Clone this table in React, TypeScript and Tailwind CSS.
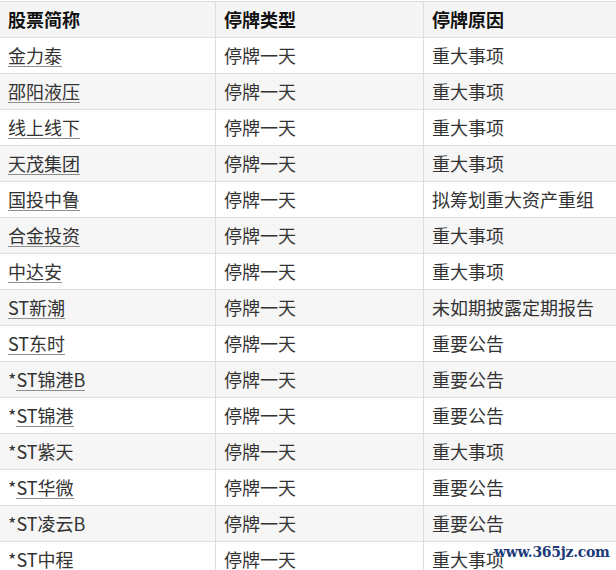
import React from "react";

type Row = { pre?: string; name: string; link: boolean; type: string; reason: string };

const rows: Row[] = [
  { name: "金力泰", link: true, type: "停牌一天", reason: "重大事项" },
  { name: "邵阳液压", link: true, type: "停牌一天", reason: "重大事项" },
  { name: "线上线下", link: true, type: "停牌一天", reason: "重大事项" },
  { name: "天茂集团", link: true, type: "停牌一天", reason: "重大事项" },
  { name: "国投中鲁", link: true, type: "停牌一天", reason: "拟筹划重大资产重组" },
  { name: "合金投资", link: true, type: "停牌一天", reason: "重大事项" },
  { name: "中达安", link: true, type: "停牌一天", reason: "重大事项" },
  { name: "ST新潮", link: true, type: "停牌一天", reason: "未如期披露定期报告" },
  { name: "ST东时", link: true, type: "停牌一天", reason: "重要公告" },
  { pre: "*", name: "ST锦港B", link: true, type: "停牌一天", reason: "重要公告" },
  { pre: "*", name: "ST锦港", link: true, type: "停牌一天", reason: "重要公告" },
  { pre: "*", name: "ST紫天", link: false, type: "停牌一天", reason: "重大事项" },
  { pre: "*", name: "ST华微", link: true, type: "停牌一天", reason: "重要公告" },
  { pre: "*", name: "ST凌云B", link: false, type: "停牌一天", reason: "重要公告" },
  { pre: "*", name: "ST中程", link: false, type: "停牌一天", reason: "重大事项" },
];

const font = { fontFamily: '"Noto Sans CJK SC", "Noto Sans", sans-serif' };

export default function App() {
  return (
    <div className="relative w-[616px] h-[570px] overflow-hidden bg-white" style={font}>
      <table className="mt-px -ml-px w-[660px] table-fixed border-collapse text-[18px] text-[#333]">
        <colgroup>
          <col className="w-[216px]" />
          <col className="w-[208px]" />
          <col />
        </colgroup>
        <thead>
          <tr className="h-9 bg-[#f5f5f5]">
            <th className="border border-[#dddddd] px-2 text-left font-bold text-[#111]">股票简称</th>
            <th className="border border-[#dddddd] px-2 text-left font-bold text-[#111]">停牌类型</th>
            <th className="border border-[#dddddd] px-2 text-left font-bold text-[#111]">停牌原因</th>
          </tr>
        </thead>
        <tbody>
          {rows.map((r, i) => (
            <tr key={i} className={i % 2 === 1 ? "h-9 bg-[#f6f6f6]" : "h-9 bg-white"}>
              <td className="border border-[#dddddd] px-2 whitespace-nowrap">
                {r.pre}
                {r.link ? (
                  <span className="inline-block leading-[22px] border-b border-[#8f8f8f]">{r.name}</span>
                ) : (
                  <span>{r.name}</span>
                )}
              </td>
              <td className="border border-[#dddddd] px-2 whitespace-nowrap">{r.type}</td>
              <td className="border border-[#dddddd] px-2 whitespace-nowrap">{r.reason}</td>
            </tr>
          ))}
        </tbody>
      </table>
      <div
        className="absolute left-[494px] top-[543px] text-[14px] font-bold leading-[18px] tracking-[-0.3px] text-[#1d3b78]"
        style={{ fontFamily: '"DejaVu Serif", serif', textShadow: "0 0 2px #fff, 0 0 2px #fff" }}
      >
        www.365jz.com
      </div>
    </div>
  );
}
